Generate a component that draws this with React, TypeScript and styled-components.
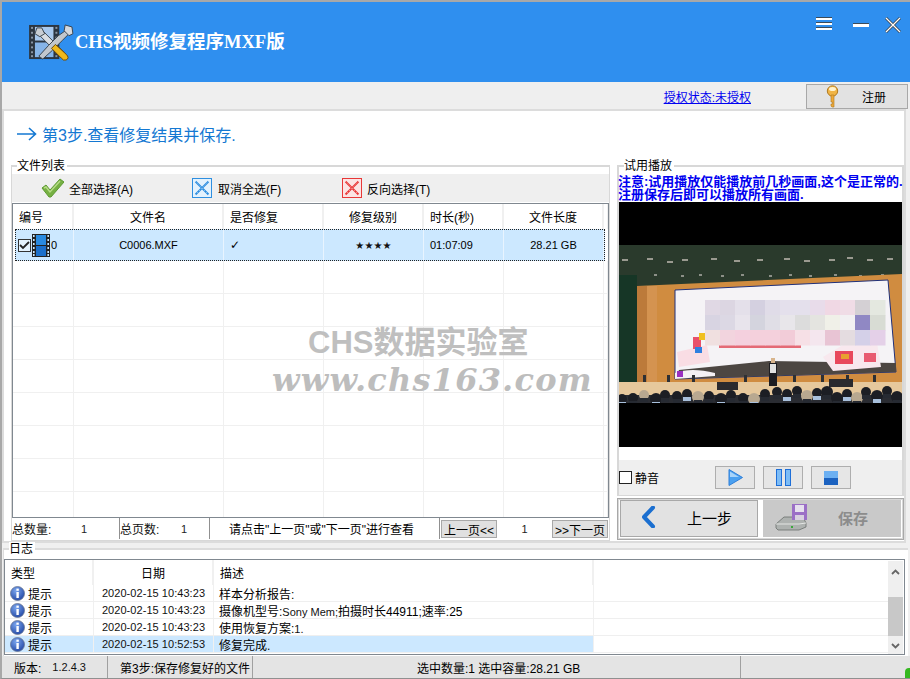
import React from "react";
import styled, { createGlobalStyle } from "styled-components";

const GlobalStyle = createGlobalStyle`
  html, body {
    margin: 0;
    padding: 0;
    background: #fff;
    overflow: hidden;
  }
  * {
    box-sizing: border-box;
  }
`;

const uiFont = `"Liberation Sans", "Noto Sans CJK SC", sans-serif`;

const Window = styled.div`
  width: 910px;
  height: 679px;
  display: flex;
  flex-direction: column;
  background: #f0f0f0;
  border-top: 2px solid #a8a8a8;
  border-left: 2px solid #a8a8a8;
  border-bottom: 1px solid #909090;
  font-family: ${uiFont};
  font-size: 12px;
  color: #000;
  position: relative;
`;

const TitleBar = styled.header`
  height: 80px;
  flex: none;
  background: #2f8fef;
  display: flex;
  align-items: center;
  padding: 0 10px 0 27px;
`;

const AppTitle = styled.h1`
  margin: 0 0 0 1px;
  font-family: "Liberation Serif", "Noto Sans CJK SC", serif;
  font-size: 18.5px;
  font-weight: 700;
  color: #fff;
  flex: 1;
  position: relative;
  top: -2px;
`;

const WindowButtons = styled.div`
  display: flex;
  align-items: flex-start;
  align-self: flex-start;
  margin-top: 15px;
  margin-right: -1px;
`;

const IconSlot = styled.span<{ $gap: number }>`
  display: block;
  line-height: 0;
  margin-right: ${(p) => p.$gap}px;
`;

const AuthBar = styled.div`
  height: 27px;
  flex: none;
  display: flex;
  align-items: center;
  justify-content: flex-end;
  background: #efefef;
  padding-right: 1px;
`;

const AuthLink = styled.a`
  color: #0000f0;
  text-decoration: underline;
  margin-right: 55px;
  position: relative;
  top: 1px;
`;

const RegisterButton = styled.button`
  width: 102px;
  height: 25px;
  margin-top: 1px;
  margin-right: 1px;
  background: #e2e2e2;
  border: 1px solid #a8a8a8;
  outline: 0;
  font: inherit;
  display: flex;
  align-items: center;
  padding: 0 0 0 19px;
  gap: 23px;
`;

const MainPanel = styled.main`
  width: 904px;
  height: 434px;
  flex: none;
  background: #fff;
  border: 2px solid #dcdcdc;
`;

const StepRow = styled.div`
  height: 54px;
  display: flex;
  align-items: center;
  gap: 5px;
  padding: 0 0 8px 13px;
  color: #1478d2;
  font-size: 16px;
`;

const Body = styled.div`
  display: flex;
  padding-left: 7px;
  gap: 7px;
`;

const Group = styled.section`
  border: 1px solid #d8d8d8;
  border-top-width: 2px;
`;

const Legend = styled.div`
  width: fit-content;
  height: 14px;
  line-height: 14px;
  margin: -8px 0 0 5px;
  padding-right: 2px;
  background: #fff;
  font-size: 12px;
`;

const FileGroup = styled(Group)`
  width: 599px;
  height: 376px;
`;

const Toolbar = styled.div`
  height: 28px;
  margin-top: 1px;
  background: #efefef;
  display: flex;
  align-items: center;
`;

const ToolAction = styled.div<{ $pad: number; $gap: number }>`
  display: flex;
  align-items: center;
  gap: ${(p) => p.$gap}px;
  width: 150px;
  padding-left: ${(p) => p.$pad}px;
`;

const FileTable = styled.div`
  position: relative;
  width: 597px;
  height: 315px;
  margin-top: 1px;
  border: 1px solid #808890;
  overflow: hidden;
`;

const fileColumns = "61px 150px 100px 100px 80px 100px 1fr";

const FileRow = styled.div`
  display: grid;
  grid-template-columns: ${fileColumns};
  height: 33px;
  border-bottom: 1px solid #f0f0f0;
`;

const FileHeader = styled(FileRow)`
  height: 25px;
  border-bottom: 0;
`;

const FileCell = styled.div<{ $align?: string; $head?: boolean }>`
  display: flex;
  align-items: center;
  justify-content: ${(p) => p.$align || "center"};
  border-right: ${(p) => (p.$head ? "2px solid #f0f0f0" : "1px solid #f0f0f0")};
  padding-left: ${(p) => (p.$align ? "6px" : "0")};
`;

const SelectedRow = styled.div`
  display: grid;
  grid-template-columns: 58px 150px 100px 100px 80px 100px;
  height: 32px;
  width: 590px;
  margin-left: 2px;
  background: #cce8ff;
  border: 1px dotted #222;
`;

const SelectedCell = styled.div<{ $align?: string }>`
  display: flex;
  align-items: center;
  justify-content: ${(p) => p.$align || "center"};
  font-size: 11px;
  padding-left: ${(p) => (p.$align ? "6px" : "0")};
  border-right: 1px solid #e8f4ff;
`;

const NameCell = styled(SelectedCell)`
  justify-content: flex-start;
  padding-left: 2px;
  gap: 1px;
`;

const RowCheck = styled.span`
  width: 13px;
  height: 13px;
  border: 1px solid #333;
  background: #e4f2fd;
  display: flex;
  align-items: center;
  justify-content: center;
`;

const Stars = styled.span`
  font-family: "DejaVu Sans", sans-serif;
  font-size: 10px;
  letter-spacing: 0.1px;
  color: #111;
`;

const RepairMark = styled.span`
  font-family: "DejaVu Sans", sans-serif;
  font-size: 12px;
  font-weight: 700;
`;

const WatermarkTitle = styled.div`
  position: absolute;
  left: 295px;
  top: 119px;
  font-family: "Liberation Sans", "Noto Sans CJK SC", sans-serif;
  font-size: 31px;
  line-height: 40px;
  font-weight: 700;
  color: #bfbfbf;
  white-space: nowrap;
  pointer-events: none;
`;

const WatermarkUrl = styled.div`
  position: absolute;
  left: 259px;
  top: 157px;
  font-family: "DejaVu Serif", "Liberation Serif", serif;
  font-style: italic;
  font-size: 32px;
  line-height: 38px;
  font-weight: 700;
  letter-spacing: 1.2px;
  color: #bdbdbd;
  white-space: nowrap;
  pointer-events: none;
`;

const Pager = styled.div`
  display: flex;
  align-items: center;
  height: 21px;
  width: 597px;
`;

const PagerCell = styled.div<{ $width: number; $line?: boolean; $pad?: number }>`
  width: ${(p) => p.$width}px;
  height: 100%;
  display: flex;
  align-items: center;
  padding-left: ${(p) => p.$pad ?? 0}px;
  border-right: ${(p) => (p.$line ? "1px solid #909090" : "0")};
`;

const PagerLabel = styled.span<{ $width: number }>`
  color: #111;
  width: ${(p) => p.$width}px;
`;

const PagerValue = styled.span`
  font-size: 11px;
  color: #222;
`;

const PagerHint = styled.span`
  margin-left: 19px;
  white-space: nowrap;
`;

const PageButton = styled.button`
  width: 56px;
  height: 18px;
  padding: 0;
  background: #e0e0e0;
  border: 1px solid #a8a8a8;
  font: inherit;
  font-size: 12px;
  white-space: nowrap;
`;

const PageNumber = styled.span`
  width: 55px;
  text-align: center;
  font-size: 11px;
  color: #222;
`;

const RightColumn = styled.div`
  width: 287px;
  display: flex;
  flex-direction: column;
  gap: 2px;
`;

const PlayerGroup = styled(Group)`
  height: 331px;
  border-width: 2px 2px 1px 2px;
`;

const Notice = styled.p`
  margin: 2px 0 1px -1px;
  height: 26px;
  font-size: 13px;
  line-height: 13px;
  font-weight: 700;
  color: #0000f0;
  white-space: nowrap;
`;

const VideoFrame = styled.div`
  width: 283px;
  height: 245px;
  background: #000;
  padding-top: 43px;
`;

const Controls = styled.div`
  width: 283px;
  height: 35px;
  margin-top: 13px;
  background: #efefef;
  display: flex;
  align-items: center;
`;

const MuteBox = styled.span`
  width: 13px;
  height: 13px;
  border: 1px solid #222;
  background: #fff;
  margin-right: 3px;
`;

const MuteLabel = styled.span`
  width: 80px;
`;

const MediaButton = styled.button`
  width: 40px;
  height: 23px;
  margin-right: 8px;
  padding: 0;
  background: #e6e6e6;
  border: 1px solid #aeaeae;
  display: flex;
  align-items: center;
  justify-content: center;
`;

const ActionPanel = styled.div`
  height: 42px;
  border: 1px solid #a8a8a8;
  outline: 1px solid #d8d8d8;
  outline-offset: -2px;
  display: flex;
  align-items: flex-start;
  gap: 5px;
  padding: 1px 0 0 2px;
`;

const ActionButton = styled.button<{ $disabled?: boolean }>`
  width: 138px;
  height: 37px;
  padding: 0 0 3px ${(p) => (p.$disabled ? "11px" : "21px")};
  background: ${(p) => (p.$disabled ? "#c9c9c9" : "#e2e2e2")};
  border: 1px solid ${(p) => (p.$disabled ? "#c9c9c9" : "#a8a8a8")};
  display: flex;
  align-items: center;
  gap: 31px;
  font-family: ${uiFont};
  font-size: 15px;
  font-weight: ${(p) => (p.$disabled ? 700 : 400)};
  color: ${(p) => (p.$disabled ? "#8c8c8c" : "#000")};
`;

const LogGroup = styled.section`
  height: 108px;
  flex: none;
  margin: 5px 0 0 1px;
  width: 905px;
  background: #fff;
  border-top: 2px solid #dcdcdc;
  border-left: 1px solid #dcdcdc;
  display: flex;
  flex-direction: column;
`;

const LogTable = styled.div`
  width: 901px;
  height: 96px;
  margin-top: 3px;
  border: 1px solid #808890;
  position: relative;
  overflow: hidden;
`;

const logColumns = "89px 120px 380px 1fr";

const LogHeader = styled.div`
  display: grid;
  grid-template-columns: ${logColumns};
  height: 25px;
`;

const LogHeadCell = styled.div<{ $center?: boolean }>`
  display: flex;
  align-items: center;
  justify-content: ${(p) => (p.$center ? "center" : "flex-start")};
  padding-left: ${(p) => (p.$center ? "0" : "6px")};
  border-right: 2px solid #f0f0f0;
  &:last-child {
    border-right: 0;
  }
`;

const LogRow = styled.div`
  display: grid;
  grid-template-columns: ${logColumns};
  height: 17px;
  margin-right: 15px;
  border-bottom: 1px solid #efefef;
`;

const LogCell = styled.div<{ $selected?: boolean; $align?: string }>`
  display: flex;
  align-items: center;
  justify-content: ${(p) => p.$align || "flex-start"};
  gap: 3px;
  padding-left: ${(p) => (p.$align ? "0" : "5px")};
  background: ${(p) => (p.$selected ? "#cce8ff" : "transparent")};
  border-right: 1px solid #f0f0f0;
  white-space: nowrap;
  overflow: hidden;
`;

const TimeText = styled.span`
  font-size: 11px;
  letter-spacing: 0.05px;
  color: #111;
`;

const LatinSmall = styled.span<{ $gap?: number }>`
  font-size: 11px;
  color: #111;
  margin-left: ${(p) => p.$gap ?? 0}px;
`;

const ScrollBar = styled.div`
  position: absolute;
  right: 1px;
  top: 1px;
  bottom: 0;
  width: 15px;
  background: #efefef;
  display: flex;
  flex-direction: column;
  align-items: center;
  justify-content: space-between;
  padding: 8px 0 5px;
`;

const ScrollThumb = styled.div`
  position: absolute;
  left: 0;
  top: 36px;
  width: 15px;
  height: 39px;
  background: #c8c8c8;
`;

const StatusBar = styled.footer`
  flex: 1;
  display: flex;
  align-items: center;
  background: #e4e4e4;
`;

const StatusCell = styled.div<{ $width: number; $line?: boolean; $pad?: number }>`
  width: ${(p) => p.$width}px;
  height: 100%;
  display: flex;
  align-items: center;
  padding-left: ${(p) => p.$pad ?? 0}px;
  border-right: ${(p) => (p.$line ? "1px solid #a0a0a0" : "0")};
  white-space: nowrap;
`;

const CornerMark = styled.div`
  position: absolute;
  right: 0;
  bottom: 0;
  width: 5px;
  height: 10px;
  background: #35b820;
  border-radius: 4px 0 0 0;
`;

const LogoIcon = () => (
  <svg width="45" height="37" viewBox="0 0 46 38">
    <rect x="0" y="1" width="31" height="35" fill="#2c3540" />
    <rect x="6" y="3" width="19" height="14" fill="#a9c9ee" />
    <rect x="6" y="19" width="19" height="15" fill="#86b4e8" />
    {[3, 8, 13, 18, 23, 28, 32].map((y) => (
      <g key={y}>
        <rect x="2" y={y} width="2" height="2" fill="#8a97a6" />
        <rect x="27" y={y} width="2" height="2" fill="#8a97a6" />
      </g>
    ))}
    <path d="M14 7 L36 29 L32 33 L10 11 Z" fill="#d9dde2" stroke="#3c4650" strokeWidth="1" />
    <path d="M8 4 L13 4 L16 10 L11 13 L6 10 Z" fill="#c9ced4" stroke="#3c4650" strokeWidth="1" />
    <path d="M40 5 L43 8 L34 17 L24 27 L14 36 L10 33 L20 22 L30 12 Z" fill="#c2c7cd" stroke="#3a444e" strokeWidth="1" />
    <path d="M37 1 L44 3 L45 10 L41 12 L36 7 Z" fill="#d5d9de" stroke="#3a444e" strokeWidth="1" />
    <path d="M27 21 L38 31 Q42 35 38 37 Q35 38 33 35 L23 25 Z" fill="#f0b91c" stroke="#6a4a08" strokeWidth="1" />
  </svg>
);

const MenuIcon = () => (
  <svg width="16" height="14" viewBox="0 0 16 14">
    <rect y="0" width="16" height="1" fill="#3a4a5a" />
    <rect y="1" width="16" height="2" fill="#fff" />
    <rect y="5" width="16" height="1" fill="#3a4a5a" />
    <rect y="6" width="16" height="2" fill="#fff" />
    <rect y="10" width="16" height="1" fill="#3a4a5a" />
    <rect y="11" width="16" height="2" fill="#fff" />
  </svg>
);

const MinimizeIcon = () => (
  <svg width="16" height="14" viewBox="0 0 16 14">
    <rect y="6" width="16" height="1" fill="#3a4a5a" />
    <rect y="7" width="16" height="3" fill="#fff" />
  </svg>
);

const CloseIcon = () => (
  <svg width="16" height="16" viewBox="0 0 16 16">
    <path d="M1 1 L15 15 M15 1 L1 15" stroke="#333" strokeWidth="2.6" />
    <path d="M1 1 L15 15 M15 1 L1 15" stroke="#fff" strokeWidth="1.4" />
  </svg>
);

const KeyIcon = () => (
  <svg width="13" height="23" viewBox="0 0 13 23">
    <circle cx="6.5" cy="6" r="5.2" fill="#f0b445" stroke="#b07a20" strokeWidth="1" />
    <ellipse cx="6.5" cy="4" rx="3.5" ry="2" fill="#fff3cf" />
    <path d="M5 10 H8 V22 H6 L5 21 V19 H6.5 V17 H5 Z" fill="#eda93a" stroke="#b07a20" strokeWidth="0.6" />
  </svg>
);

const ArrowIcon = () => (
  <svg width="20" height="14" viewBox="0 0 20 14">
    <path d="M0 7 H18 M12 1 L18.5 7 L12 13" fill="none" stroke="#1478d2" strokeWidth="1.6" />
  </svg>
);

const GreenCheck = () => (
  <svg width="23" height="20" viewBox="0 0 23 20">
    <path d="M1 10 L5 7 L9 12 L19 1 L23 4 L10 19 L8 19 Z" fill="#76b043" stroke="#5d9a32" strokeWidth="1" />
    <path d="M3 10 L5 9 L9 14 L19 3" fill="none" stroke="#b8dc88" strokeWidth="1.4" />
  </svg>
);

const CrossBox = ({ color, fill }: { color: string; fill: string }) => (
  <svg width="20" height="20" viewBox="0 0 20 20">
    <rect x="0.5" y="0.5" width="19" height="19" fill={fill} stroke={color} />
    <path d="M3.5 3.5 L16.5 16.5 M16.5 3.5 L3.5 16.5" stroke={color} strokeWidth="1.8" />
    <path d="M3.5 3.5 L16.5 16.5 M16.5 3.5 L3.5 16.5" stroke="#fff" strokeWidth="0.6" strokeDasharray="1 2" />
  </svg>
);

const TickIcon = () => (
  <svg width="11" height="9" viewBox="0 0 11 9">
    <path d="M1 4 L4 7 L10 1" fill="none" stroke="#222" strokeWidth="1.8" />
  </svg>
);

const FilmIcon = () => (
  <svg width="18" height="23" viewBox="0 0 18 23">
    <rect x="0" y="0" width="18" height="23" fill="#222" />
    {[1, 5, 9, 13, 17, 20].map((y) => (
      <g key={y}>
        <rect x="1" y={y} width="1.6" height="2" fill="#cce8ff" />
        <rect x="15.4" y={y} width="1.6" height="2" fill="#cce8ff" />
      </g>
    ))}
    <rect x="4" y="1" width="10" height="10" fill="#2a8ae0" />
    <rect x="4" y="12" width="10" height="10" fill="#1c6fca" />
  </svg>
);

const InfoIcon = () => (
  <svg width="15" height="15" viewBox="0 0 15 15">
    <defs>
      <radialGradient id="infoFill" cx="0.4" cy="0.3" r="0.8">
        <stop offset="0" stopColor="#7ba6ee" />
        <stop offset="1" stopColor="#1a3f9e" />
      </radialGradient>
    </defs>
    <circle cx="7.5" cy="7.5" r="7" fill="url(#infoFill)" stroke="#6d7a94" strokeWidth="0.8" />
    <rect x="6.4" y="2.6" width="2.4" height="2.2" fill="#fff" />
    <rect x="6.4" y="6" width="2.4" height="6" fill="#fff" />
  </svg>
);

const PlayIcon = () => (
  <svg width="15" height="17" viewBox="0 0 15 17">
    <path d="M1 0.5 L14.5 8.5 L1 16.5 Z" fill="#4aa0f0" stroke="#2f7fd8" />
    <path d="M2 2.5 L11 8 L2 8 Z" fill="#a8d4fa" />
  </svg>
);

const PauseIcon = () => (
  <svg width="15" height="17" viewBox="0 0 15 17">
    <rect x="0.5" y="0.5" width="5" height="16" fill="#7cbcf6" stroke="#1e6fd8" />
    <rect x="9.5" y="0.5" width="5" height="16" fill="#7cbcf6" stroke="#1e6fd8" />
  </svg>
);

const StopIcon = () => (
  <svg width="14" height="14" viewBox="0 0 14 14">
    <rect width="14" height="7" fill="#6cb0f2" />
    <rect y="7" width="14" height="7" fill="#1b62c0" />
  </svg>
);

const BackIcon = () => (
  <svg width="14" height="22" viewBox="0 0 14 22">
    <path d="M11 1.5 L2 11 L11 20.5" fill="none" stroke="#1b6fd0" strokeWidth="4" strokeLinecap="round" strokeLinejoin="round" />
  </svg>
);

const DiskIcon = () => (
  <svg width="32" height="27" viewBox="0 0 32 27">
    <path d="M1 20 L9 13 H28 L31 19 V23 L24 26 H3 L1 24 Z" fill="#aeb2b0" stroke="#6a6e6c" strokeWidth="0.8" />
    <path d="M1 20 H24 L31 19" fill="none" stroke="#e4e6e4" />
    <rect x="17" y="0" width="15" height="16" fill="#9b6fc6" />
    <rect x="20" y="1" width="9" height="7" fill="#e6e0ee" />
    <rect x="20" y="11" width="9" height="5" fill="#d8d0e0" />
    <rect x="16" y="22" width="2" height="2" fill="#3ca83c" />
  </svg>
);

const ChevronIcon = ({ up }: { up?: boolean }) => (
  <svg width="9" height="6" viewBox="0 0 9 6">
    <path d={up ? "M1 5 L4.5 1.5 L8 5" : "M1 1 L4.5 4.5 L8 1"} fill="none" stroke="#666" strokeWidth="1.8" />
  </svg>
);

const mosaic = [
  ["#e0d8e4", "#dcd6e2", "#e4e0ea", "#d4d0e0", "#e0dce8", "#e4e0ec", "#e4e0ec", "#e8dcea", "#f0d8e4", "#f0dce6", "#d4d0d4", "#e4e8e0"],
  ["#d8d4e2", "#dcd8e4", "#e8e4ec", "#d4d4de", "#e0dee6", "#e8e6ea", "#dcdcdc", "#e4e4e0", "#f0f0e8", "#f2f0f2", "#9088c4", "#d8dcd4"],
  ["#f0e0e0", "#f2d4de", "#f4d0de", "#f4d0dc", "#f4d0dc", "#f2ccd8", "#f6e0e6", "#f4e6ee", "#e8c4d4", "#e4dce0", "#d4d0e8", "#e4d0e8"],
];

const crowd = [
  [3, 154, 5], [14, 153, 5], [25, 150, 5], [37, 154, 6], [46, 150, 5], [58, 151, 5], [68, 149, 5], [79, 152, 6],
  [90, 151, 5], [102, 154, 6], [112, 150, 5], [124, 153, 5], [135, 154, 6], [146, 149, 5], [158, 147, 5], [168, 149, 5],
  [178, 146, 5], [188, 151, 6], [198, 148, 5], [208, 147, 6], [218, 153, 6], [228, 149, 5], [238, 153, 6], [247, 147, 5],
  [258, 151, 6], [268, 146, 5], [278, 152, 6],
];
const ceilingLights = [
  [3, 14], [28, 13], [48, 16], [63, 14], [92, 13], [115, 15], [138, 14], [165, 13], [185, 15], [210, 14], [228, 12], [248, 14], [268, 13],
];
const lowerLights = [10, 35, 62, 80, 102, 122, 150, 170, 190, 215, 240, 262, 276];
const stageLamps = [24, 48, 73, 125, 174, 202, 227, 254];

const VideoStill = () => (
  <svg width="283" height="158" viewBox="0 0 283 158" style={{ display: "block" }}>
    <rect width="283" height="158" fill="#2a3a2c" />
    {ceilingLights.map(([x, y]) => (
      <rect key={x} x={x} y={y} width="6" height="2" fill="#9a9a90" />
    ))}
    {lowerLights.map((x, i) => (
      <rect key={x} x={x} y={30 - (i % 2)} width="3" height="2" fill="#8c9088" />
    ))}
    <path d="M18 41 L283 29 V143 H18 Z" fill="#d08c40" />
    <rect x="18" y="41" width="10" height="100" fill="#bc7a3a" />
    <rect x="28" y="41" width="10" height="100" fill="#d49350" />
    <rect x="0" y="30" width="18" height="118" fill="#163626" />
    <path d="M56 45 L269 35 L277 127 L56 134 Z" fill="#f5f3f6" stroke="#20307a" strokeWidth="1" />
    <path d="M60 125 L150 116 L277 118 L277 127 L56 134 Z" fill="#4c4642" />
    <path d="M56 128 Q72 122 96 128 L96 131 L56 134 Z" fill="#f4f0f4" />
    <path d="M58 107 L88 100 L91 117 L60 122 Z" fill="#f9dde4" />
    <rect x="74" y="92" width="8" height="12" fill="#e8506a" />
    <rect x="76" y="102" width="7" height="6" fill="#2e7fe0" />
    <rect x="80" y="88" width="6" height="7" fill="#f0c020" />
    <rect x="58" y="126" width="6" height="6" fill="#9a30c0" />
    <path d="M204 112 L224 100 L258 98 L262 122 L214 126 Z" fill="#f8e8ee" />
    <rect x="216" y="106" width="18" height="13" fill="#e8485c" />
    <rect x="222" y="109" width="8" height="5" fill="#e8a030" />
    <rect x="245" y="108" width="12" height="9" fill="#e85a70" />
    <rect x="100" y="100" width="82" height="3" fill="#e46a76" />
    {mosaic.map((row, r) =>
      row.map((c, i) => (
        <rect key={`${r}-${i}`} x={86 + i * 15} y={55 + r * 15} width="15.5" height="15.5" fill={c} />
      ))
    )}
    {stageLamps.map((x) => (
      <rect key={x} x={x} y="130" width="3" height="7" fill="#2e3034" />
    ))}
    <rect y="137" width="283" height="13" fill="#e6c89c" />
    <rect x="150" y="118" width="8" height="23" fill="#1d1d22" />
    <rect x="151" y="119" width="6" height="9" fill="#e2e2e2" />
    <rect x="152" y="113" width="4" height="5" fill="#d8b48c" />
    <rect x="98" y="137" width="21" height="8" fill="#2a2a2e" />
    <rect x="210" y="134" width="24" height="8" fill="#2a2a2e" />
    <rect x="0" y="150" width="283" height="8" fill="#2a2c32" />
    {crowd.map(([x, y, r], i) => (
      <g key={x}>
        <circle cx={x} cy={y} r={r} fill={i % 5 === 2 ? "#b8a890" : "#1c1e24"} />
        <rect x={x - 4} y={y + 3} width="8" height="4" fill={i % 3 === 0 ? "#a8c0dc" : "#262a32"} />
      </g>
    ))}
  </svg>
);

const emptyRows = [0, 1, 2, 3, 4, 5, 6, 7];

const logs = [
  { time: "2020-02-15 10:43:23", cjk: "样本分析报告:", latin: "" },
  { time: "2020-02-15 10:43:23", cjk: "摄像机型号:", latin: "Sony Mem;", tail: "拍摄时长44911;速率:25" },
  { time: "2020-02-15 10:43:23", cjk: "使用恢复方案:", latin: "1." },
  { time: "2020-02-15 10:52:53", cjk: "修复完成.", latin: "", selected: true },
];

export default function App() {
  return (
    <>
      <GlobalStyle />
      <Window>
        <TitleBar>
          <LogoIcon />
          <AppTitle>CHS视频修复程序MXF版</AppTitle>
          <WindowButtons>
            <IconSlot $gap={21}>
              <MenuIcon />
            </IconSlot>
            <IconSlot $gap={16}>
              <MinimizeIcon />
            </IconSlot>
            <IconSlot $gap={0}>
              <CloseIcon />
            </IconSlot>
          </WindowButtons>
        </TitleBar>
        <AuthBar>
          <AuthLink>授权状态:未授权</AuthLink>
          <RegisterButton>
            <KeyIcon />
            注册
          </RegisterButton>
        </AuthBar>
        <MainPanel>
          <StepRow>
            <ArrowIcon />
            第3步.查看修复结果并保存.
          </StepRow>
          <Body>
            <FileGroup>
              <Legend>文件列表</Legend>
              <Toolbar>
                <ToolAction $pad={29} $gap={5}>
                  <GreenCheck />
                  全部选择(A)
                </ToolAction>
                <ToolAction $pad={30} $gap={6}>
                  <CrossBox color="#2f8fe0" fill="#e4f2fd" />
                  取消全选(F)
                </ToolAction>
                <ToolAction $pad={30} $gap={5}>
                  <CrossBox color="#e83838" fill="#fbe4e4" />
                  反向选择(T)
                </ToolAction>
              </Toolbar>
              <FileTable>
                <FileHeader>
                  <FileCell $head $align="flex-start">编号</FileCell>
                  <FileCell $head>文件名</FileCell>
                  <FileCell $head $align="flex-start">是否修复</FileCell>
                  <FileCell $head>修复级别</FileCell>
                  <FileCell $head $align="flex-start">时长(秒)</FileCell>
                  <FileCell $head>文件长度</FileCell>
                  <FileCell />
                </FileHeader>
                <SelectedRow>
                  <NameCell>
                    <RowCheck>
                      <TickIcon />
                    </RowCheck>
                    <FilmIcon />
                    0
                  </NameCell>
                  <SelectedCell>C0006.MXF</SelectedCell>
                  <SelectedCell $align="flex-start">
                    <RepairMark>✓</RepairMark>
                  </SelectedCell>
                  <SelectedCell>
                    <Stars>★★★★</Stars>
                  </SelectedCell>
                  <SelectedCell $align="flex-start">01:07:09</SelectedCell>
                  <SelectedCell>28.21 GB</SelectedCell>
                </SelectedRow>
                {emptyRows.map((r) => (
                  <FileRow key={r}>
                    <FileCell />
                    <FileCell />
                    <FileCell />
                    <FileCell />
                    <FileCell />
                    <FileCell />
                    <FileCell />
                  </FileRow>
                ))}
                <WatermarkTitle>CHS数据实验室</WatermarkTitle>
                <WatermarkUrl>www.chs163.com</WatermarkUrl>
              </FileTable>
              <Pager>
                <PagerCell $width={108} $line>
                  <PagerLabel $width={69}>总数量:</PagerLabel>
                  <PagerValue>1</PagerValue>
                </PagerCell>
                <PagerCell $width={90} $line>
                  <PagerLabel $width={61}>总页数:</PagerLabel>
                  <PagerValue>1</PagerValue>
                </PagerCell>
                <PagerCell $width={230} $line>
                  <PagerHint>请点击"上一页"或"下一页"进行查看</PagerHint>
                </PagerCell>
                <PagerCell $width={169} $pad={1}>
                  <PageButton>上一页&lt;&lt;</PageButton>
                  <PageNumber>1</PageNumber>
                  <PageButton>&gt;&gt;下一页</PageButton>
                </PagerCell>
              </Pager>
            </FileGroup>
            <RightColumn>
              <PlayerGroup>
                <Legend>试用播放</Legend>
                <Notice>
                  注意:试用播放仅能播放前几秒画面,这个是正常的.
                  <br />
                  注册保存后即可以播放所有画面.
                </Notice>
                <VideoFrame>
                  <VideoStill />
                </VideoFrame>
                <Controls>
                  <MuteBox />
                  <MuteLabel>静音</MuteLabel>
                  <MediaButton>
                    <PlayIcon />
                  </MediaButton>
                  <MediaButton>
                    <PauseIcon />
                  </MediaButton>
                  <MediaButton>
                    <StopIcon />
                  </MediaButton>
                </Controls>
              </PlayerGroup>
              <ActionPanel>
                <ActionButton>
                  <BackIcon />
                  上一步
                </ActionButton>
                <ActionButton $disabled>
                  <DiskIcon />
                  保存
                </ActionButton>
              </ActionPanel>
            </RightColumn>
          </Body>
        </MainPanel>
        <LogGroup>
          <Legend>日志</Legend>
          <LogTable>
            <LogHeader>
              <LogHeadCell>类型</LogHeadCell>
              <LogHeadCell $center>日期</LogHeadCell>
              <LogHeadCell>描述</LogHeadCell>
              <LogHeadCell />
            </LogHeader>
            {logs.map((log, i) => (
              <LogRow key={i}>
                <LogCell $selected={log.selected}>
                  <InfoIcon />
                  提示
                </LogCell>
                <LogCell $selected={log.selected} $align="center">
                  <TimeText>{log.time}</TimeText>
                </LogCell>
                <LogCell $selected={log.selected}>
                  <span>
                    {log.cjk}
                    <LatinSmall>{log.latin}</LatinSmall>
                    {log.tail}
                  </span>
                </LogCell>
                <LogCell />
              </LogRow>
            ))}
            <ScrollBar>
              <ChevronIcon up />
              <ScrollThumb />
              <ChevronIcon />
            </ScrollBar>
          </LogTable>
        </LogGroup>
        <StatusBar>
          <StatusCell $width={106} $line $pad={12}>
            版本:
            <LatinSmall $gap={11}>1.2.4.3</LatinSmall>
          </StatusCell>
          <StatusCell $width={145} $line $pad={12}>
            第3步:保存修复好的文件
          </StatusCell>
          <StatusCell $width={488} $line $pad={164}>
            选中数量:1 选中容量:28.21 GB
          </StatusCell>
        </StatusBar>
        <CornerMark />
      </Window>
    </>
  );
}
